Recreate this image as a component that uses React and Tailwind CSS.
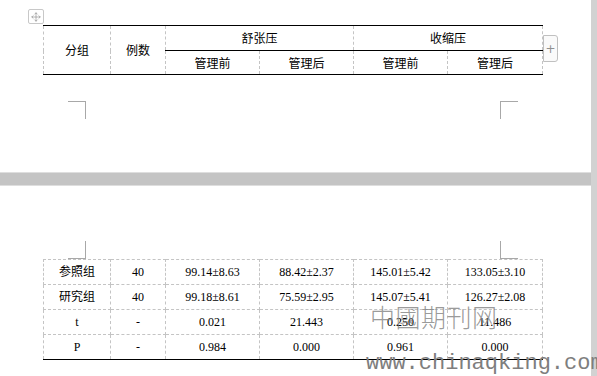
import React from 'react'
import { Move } from 'lucide-react'

const cell = 'border border-dashed border-[#c4c4c4] text-center p-0 font-normal'

const rows = [
  ['参照组', '40', '99.14±8.63', '88.42±2.37', '145.01±5.42', '133.05±3.10'],
  ['研究组', '40', '99.18±8.61', '75.59±2.95', '145.07±5.41', '126.27±2.08'],
  ['t', '-', '0.021', '21.443', '0.250', '11.486'],
  ['P', '-', '0.984', '0.000', '0.961', '0.000'],
]

const Cols = () => (
  <colgroup>
    <col className="w-[67px]" />
    <col className="w-[55px]" />
    <col className="w-[94px]" />
    <col className="w-[94px]" />
    <col className="w-[94px]" />
    <col className="w-[95px]" />
  </colgroup>
)

const App = () => {
  return (
    <div className="relative w-[597px] h-[376px] overflow-hidden bg-white flex font-['Liberation_Serif','Noto_Sans_CJK_SC',serif] text-black">
      <div className="flex-1 flex flex-col">
        {/* 上一页底部 */}
        <div className="relative h-[172px] pt-[25px] pl-[43px]">
          <div className="absolute left-[28px] top-[9px] w-[16px] h-[15px] border border-[#c8c8c8] rounded-[2px] flex items-center justify-center">
            <Move size={10} strokeWidth={1.5} color="#8a8a8a" />
          </div>
          <table className="w-[499px] table-fixed border-collapse border-t border-b border-black text-[12px] font-['Noto_Sans_CJK_SC',sans-serif]">
            <Cols />
            <tbody>
              <tr className="h-[25px]">
                <td rowSpan={2} className={cell + ' border-t-black border-b-black'}>分组</td>
                <td rowSpan={2} className={cell + ' border-t-black border-b-black'}>例数</td>
                <td colSpan={2} className={cell + ' border-t-black border-b-black [border-bottom-style:solid]!'}>舒张压</td>
                <td colSpan={2} className={cell + ' border-t-black border-b-black [border-bottom-style:solid]!'}>收缩压</td>
              </tr>
              <tr className="h-[24px]">
                <td className={cell + ' border-b-black'}>管理前</td>
                <td className={cell + ' border-b-black'}>管理后</td>
                <td className={cell + ' border-b-black'}>管理前</td>
                <td className={cell + ' border-b-black'}>管理后</td>
              </tr>
            </tbody>
          </table>
          <div className="absolute left-[543px] top-[35px] w-[15px] h-[27px] border border-[#c0c0c0] rounded-r-[3px] bg-[#fafafa] flex items-center justify-center text-[#909090] text-[12px] leading-none font-['DejaVu_Sans',sans-serif]">
            +
          </div>
          <div className="mt-[26px] ml-[25px] w-[450px] flex justify-between">
            <div className="w-[18px] h-[18px] border-t border-r border-[#a8a8a8]" />
            <div className="w-[18px] h-[18px] border-t border-l border-[#a8a8a8]" />
          </div>
        </div>

        {/* 分页间隔 */}
        <div className="h-[14px] bg-[#c4c4c4] border-y border-[#dedede]" />

        {/* 下一页顶部 */}
        <div className="flex-1 pt-[55px] pl-[43px]">
          <div className="ml-[25px] w-[450px] flex justify-between">
            <div className="w-[18px] h-[18px] border-b border-r border-[#a8a8a8]" />
            <div className="w-[18px] h-[18px] border-b border-l border-[#a8a8a8]" />
          </div>
          <table className="w-[499px] table-fixed border-collapse border-b border-black text-[12px]">
            <Cols />
            <tbody>
              {rows.map((r, i) => (
                <tr key={i} className="h-[25px]">
                  {r.map((v, j) => (
                    <td key={j} className={cell + (i === rows.length - 1 ? ' border-b-black' : '')}>{v}</td>
                  ))}
                </tr>
              ))}
            </tbody>
          </table>
        </div>
      </div>
      <div className="w-[6px] bg-[#d2d2d2]" />

      {/* 水印 */}
      <div className="absolute left-[370px] top-[304px] text-[25px] leading-none tracking-[0.5px] text-[#808080]/80 font-light font-['Noto_Sans_CJK_TC',sans-serif] pointer-events-none">
        中國期刊网
      </div>
      <div className="absolute left-[366px] top-[353px] text-[22px] leading-none tracking-[0px] text-[#7e7e7e] font-['Liberation_Mono',monospace] whitespace-nowrap pointer-events-none">
        www.chinaqking.com
      </div>
    </div>
  )
}

export default App
